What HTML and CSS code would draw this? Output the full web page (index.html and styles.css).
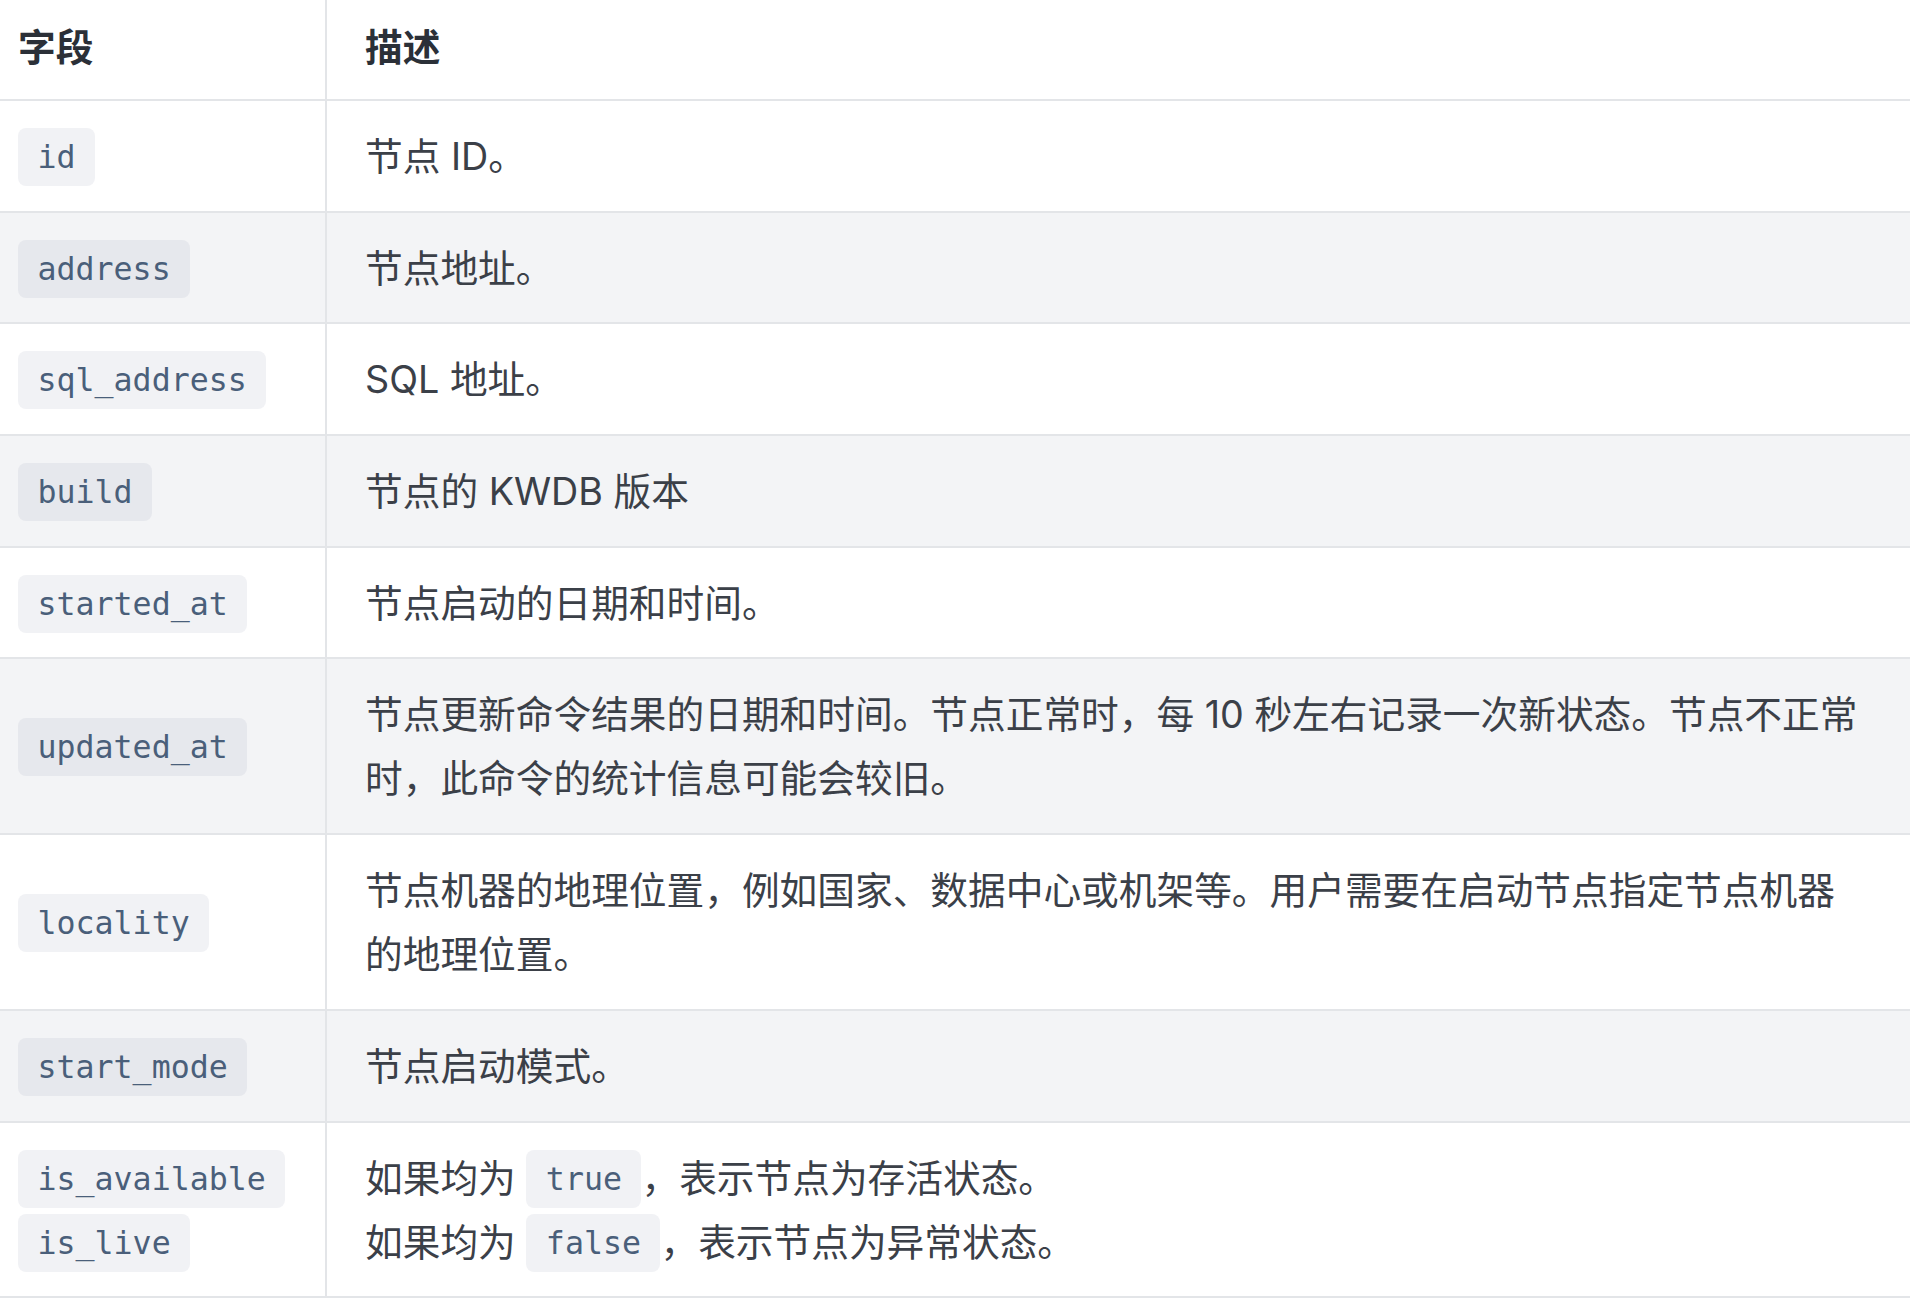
FILE: index.html
```html
<!DOCTYPE html>
<html lang="zh-CN">
<head>
  <meta charset="UTF-8" />
  <title>节点字段</title>
  <link rel="stylesheet" href="styles.css">
</head>
<body>
  <table class="field-table">
    <thead>
      <tr>
        <th>字段</th>
        <th>描述</th>
      </tr>
    </thead>
    <tbody>
      <tr>
        <td><code>id</code></td>
        <td>节点 ID。</td>
      </tr>
      <tr>
        <td><code>address</code></td>
        <td>节点地址。</td>
      </tr>
      <tr>
        <td><code>sql_address</code></td>
        <td>SQL 地址。</td>
      </tr>
      <tr>
        <td><code>build</code></td>
        <td>节点的 KWDB 版本</td>
      </tr>
      <tr>
        <td><code>started_at</code></td>
        <td>节点启动的日期和时间。</td>
      </tr>
      <tr>
        <td><code>updated_at</code></td>
        <td>节点更新命令结果的日期和时间。节点正常时，每 10 秒左右记录一次新状态。节点不正常时，此命令的统计信息可能会较旧。</td>
      </tr>
      <tr>
        <td><code>locality</code></td>
        <td>节点机器的地理位置，例如国家、数据中心或机架等。用户需要在启动节点指定节点机器的地理位置。</td>
      </tr>
      <tr>
        <td><code>start_mode</code></td>
        <td>节点启动模式。</td>
      </tr>
      <tr>
        <td><code>is_available</code><br><code>is_live</code></td>
        <td>如果均为 <code>true</code>，表示节点为存活状态。<br>如果均为 <code>false</code>，表示节点为异常状态。</td>
      </tr>
    </tbody>
  </table>
</body>
</html>
```

FILE: styles.css
```css
* {
  box-sizing: border-box;
}
body {
  margin: 0;
  background-color: #fff;
  font-family: 'Inter', 'Noto Sans CJK SC', sans-serif;
  color: #3b4048;
}
.field-table {
  width: 100%;
  table-layout: fixed;
  border-collapse: separate;
  border-spacing: 0;
  font-size: 37.7px;
  line-height: 64px;
}
.field-table th,
.field-table td {
  text-align: left;
  vertical-align: middle;
  padding: 23px 45px 22.7px 38px;
  border-bottom: 2px solid #e3e5e8;
}
.field-table th {
  padding-top: 15px;
  padding-bottom: 20px;
  font-weight: 700;
  color: #2b3038;
}
.field-table th:first-child,
.field-table td:first-child {
  width: 325px;
  padding-left: 18px;
  padding-right: 10px;
}
.field-table th + th,
.field-table td + td {
  border-left: 2px solid #e3e5e8;
}
.field-table tbody tr:nth-child(even) {
  background-color: #f3f4f6;
}
code {
  display: inline-block;
  vertical-align: top;
  margin: 4px 0 2px;
  padding: 0 19.5px;
  line-height: 58px;
  font-family: 'DejaVu Sans Mono', monospace;
  font-size: 31.6px;
  color: #4a5f7a;
  background-color: rgba(142, 150, 170, 0.12);
  border-radius: 8px;
}
```
